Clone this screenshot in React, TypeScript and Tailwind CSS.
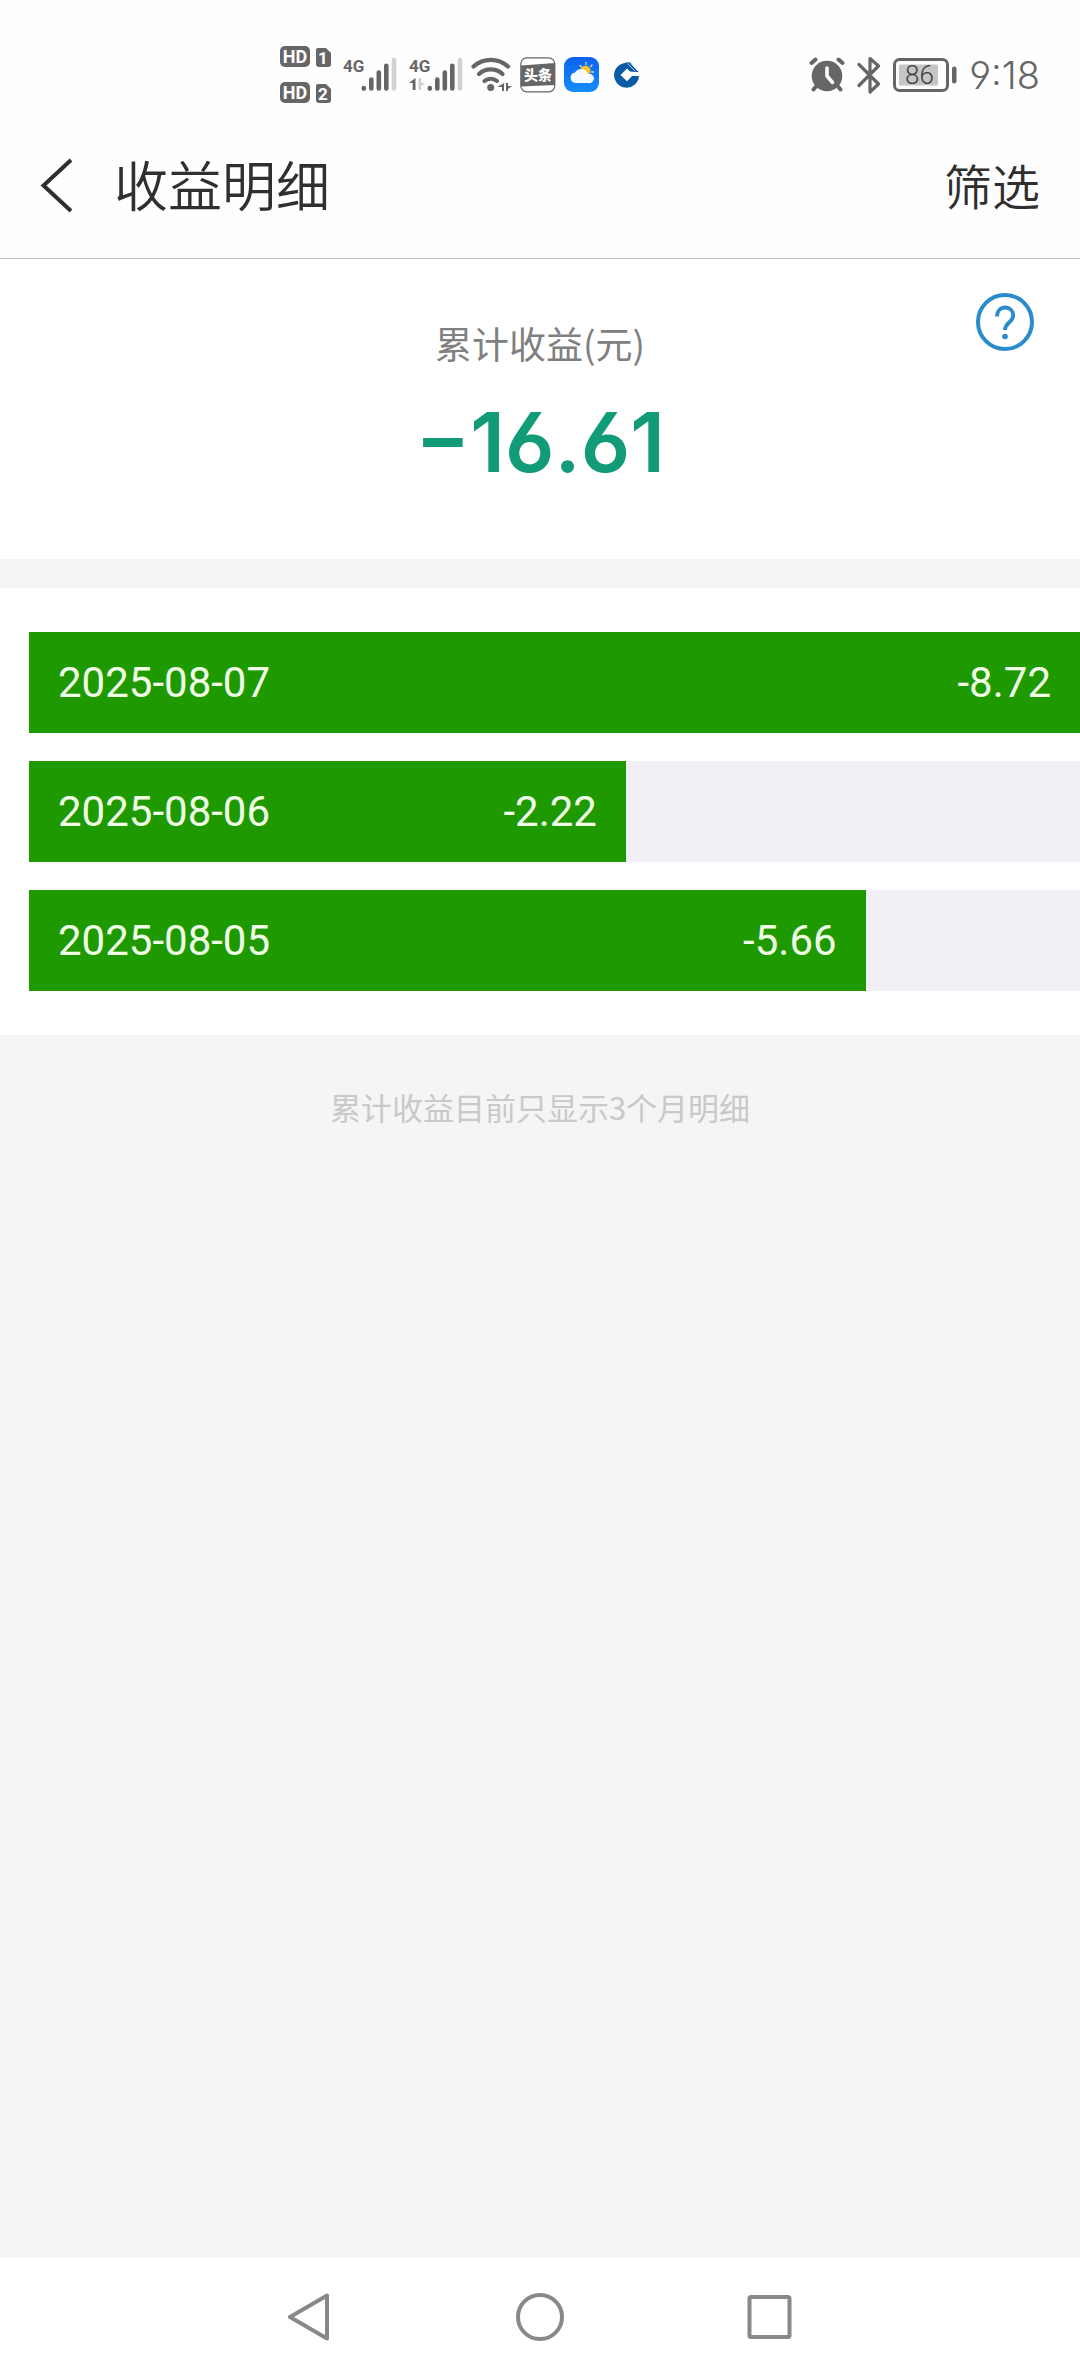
import React from 'react';

interface IncomeRecord {
  date: string;
  amount: string;
  percent: number;
}

// percent is the bar length relative to the largest daily change
const RECORDS: IncomeRecord[] = [
  { date: '2025-08-07', amount: '-8.72', percent: 100 },
  { date: '2025-08-06', amount: '-2.22', percent: 56.8 },
  { date: '2025-08-05', amount: '-5.66', percent: 79.6 },
];

const HdBadge: React.FC<{ sim: string }> = ({ sim }) => (
  <svg width="51" height="22" viewBox="0 0 51 22">
    <rect x="0" y="0" width="30" height="21" rx="5" fill="#666" />
    <text x="15" y="17" textAnchor="middle" fontSize="18" fontWeight="700" fill="#fff" className="font-['Roboto',sans-serif]">HD</text>
    <path d="M38 2h8l5 5v11a3 3 0 0 1-3 3h-9a3 3 0 0 1-3-3V4a2 2 0 0 1 2-2z" fill="#666" />
    <text x="43" y="18" textAnchor="middle" fontSize="17" fontWeight="700" fill="#fff" className="font-['Roboto',sans-serif]">{sim}</text>
  </svg>
);

const Signal: React.FC<{ data?: boolean }> = ({ data }) => (
  <svg width="54" height="48" viewBox="0 -6 54 48">
    <text x="0" y="15" fontSize="17" fontWeight="700" fill="#666" className="font-['Roboto',sans-serif]">4G</text>
    <g strokeWidth="4.6" strokeLinecap="round" stroke="#666">
      <path d="M20.8 31v.6M28.3 22.5v9M35.8 15.5v16M43.3 8.8v22.7" />
      <path d="M51 3v28.5" stroke="#d2d2d2" />
    </g>
    {data && (
      <>
        <path d="M6.5 21v12H3.700v-7H0z" fill="#666" />
        <path d="M9.5 21H12v4l4 2-4 2v4H9.5z" fill="#d2d2d2" />
      </>
    )}
  </svg>
);

const Wifi: React.FC = () => (
  <svg width="41" height="36" viewBox="0 0 41 36">
    <g fill="none" stroke="#666" strokeWidth="4.2" strokeLinecap="round">
      <path d="M2.5 9.5a25.5 25.5 0 0 1 34.5 0" />
      <path d="M8 17a17.5 17.5 0 0 1 23.5 0" />
      <path d="M13.5 24a9.800 9.800 0 0 1 12.5 0" />
    </g>
    <circle cx="19.7" cy="30.5" r="3.5" fill="#666" />
    <path d="M33 26v8h-2v-4h-4.500zM35 26h2v3h4l-4 3v2h-2z" fill="#666" />
  </svg>
);

const ToutiaoIcon: React.FC = () => (
  <svg width="36" height="36" viewBox="0 0 36 36">
    <rect x=".8" y=".8" width="34" height="34" rx="6" fill="#fff" stroke="#666" strokeWidth="1.2" />
    <path d="M1 8.500 35 6v22L1 29.500z" fill="#666" />
    <text x="18" y="23" textAnchor="middle" fontSize="14" fontWeight="900" fill="#fff" className="font-['Noto_Sans_CJK_SC',sans-serif]">头条</text>
  </svg>
);

const WeatherIcon: React.FC = () => (
  <svg width="36" height="36" viewBox="0 0 36 36">
    <defs>
      <linearGradient id="sky" x1="0" y1="0" x2="0" y2="1">
        <stop offset="0" stopColor="#0a63f0" />
        <stop offset="1" stopColor="#168df8" />
      </linearGradient>
    </defs>
    <rect width="35" height="35" rx="9" fill="url(#sky)" />
    <path d="M22 5.500v2M16 8.500l1.300 1.500M28 8l-1.300 1.500M29.500 15h-2M28 20l-1-.8" stroke="#f3dc83" strokeWidth="1.3" strokeLinecap="round" />
    <circle cx="21.5" cy="13.8" r="5" fill="#fdc32c" />
    <path d="M11.500 26a5.300 5.300 0 0 1-.5-10.500 7 7 0 0 1 12.800 1.500A4.700 4.700 0 1 1 24 26z" fill="#f5fbff" />
  </svg>
);

const BankIcon: React.FC = () => (
  <svg width="26" height="26" viewBox="0 0 26 26">
    <path fillRule="evenodd" d="M14.500.8A12.500 12.500 0 1 0 25 14h-7l-5 5.200L6.500 13 13 6.500l3 3 3.300.3z" fill="#0a5ba6" />
    <path d="M11.500.5h4.800l8.300 9.500h-5.200z" fill="#0a5ba6" />
    <path d="m13.500 1.500 8 8M16.800 1.500l7 7.500" stroke="#fff" strokeWidth=".7" />
  </svg>
);

const Alarm: React.FC = () => (
  <svg width="36" height="36" viewBox="0 0 36 36">
    <circle cx="18" cy="19" r="15.3" fill="#666" />
    <path d="m2.500 6 4-3.500M33.500 6l-4-3.500M7 29.500l-2.500 3M29 29.500l2.500 3" stroke="#666" strokeWidth="4" strokeLinecap="round" />
    <path d="M18 11v8l5.500 6.500" fill="none" stroke="#fff" strokeWidth="3.5" strokeLinecap="round" strokeLinejoin="round" />
  </svg>
);

const Bluetooth: React.FC = () => (
  <svg width="24" height="38" viewBox="0 0 24 38" fill="none" stroke="#666" strokeWidth="3.2" strokeLinecap="round" strokeLinejoin="round">
    <path d="M2 8.500 21.500 28 13 36V2.500l8.500 7.500L2 29.500" />
  </svg>
);

const Battery: React.FC = () => (
  <svg width="64" height="34" viewBox="0 0 64 34">
    <rect x="1.5" y="1.5" width="53" height="31" rx="5" fill="none" stroke="#666" strokeWidth="3" />
    <rect x="6" y="6.5" width="39" height="21" rx="1.5" fill="#c6c6c6" />
    <text x="26.5" y="26" textAnchor="middle" fontSize="26" fontWeight="300" fill="#404040" className="font-['Roboto',sans-serif]">86</text>
    <rect x="59" y="8.5" width="4.5" height="17" rx="2.2" fill="#666" />
  </svg>
);

const StatusBar: React.FC = () => (
  <div className="flex items-center justify-between pt-[38px] pr-10 pl-[280px]">
    <div className="flex items-center">
      <div className="flex flex-col gap-3.5 py-2">
        <HdBadge sim="1" />
        <HdBadge sim="2" />
      </div>
      <div className="ml-3 flex items-center gap-3">
        <Signal />
        <Signal data />
      </div>
      <div className="ml-2 flex items-center gap-2">
        <Wifi />
        <ToutiaoIcon />
      </div>
      <div className="ml-2 flex items-center gap-3.5">
        <WeatherIcon />
        <BankIcon />
      </div>
    </div>
    <div className="flex items-center gap-3">
      <Alarm />
      <Bluetooth />
      <Battery />
      <span className="font-['Inter',sans-serif] text-[38px] leading-10 font-light text-[#666] [font-feature-settings:'ss01']">9:18</span>
    </div>
  </div>
);

const Header: React.FC = () => (
  <header className="flex items-center justify-between border-b border-[#c0c0c0] pt-8 pr-10 pb-[34px] pl-9 text-[#2f2f2f]">
    <div className="flex items-center">
      <button type="button" aria-label="返回">
        <svg width="40" height="60" viewBox="0 0 40 60" fill="none" stroke="#2f2f2f" strokeWidth="4">
          <path d="M35 6 7.500 31.500 35 57" />
        </svg>
      </button>
      <h1 className="ml-[38px] text-[54px] leading-20 font-[350]">收益明细</h1>
    </div>
    <button type="button" className="text-5xl leading-20 font-[350]">筛选</button>
  </header>
);

const Summary: React.FC = () => (
  <section className="grid grid-cols-[1fr_auto_1fr] items-start bg-white px-11 pt-8 pb-16">
    <div className="col-start-2 flex flex-col items-center pt-6">
      <h2 className="text-[37px] leading-14 text-[#808080]">累计收益(元)</h2>
      <p className="mt-5 font-['Inter',sans-serif] text-[82px] leading-26 font-semibold text-[#119b76] [font-feature-settings:'ss01']">−16.61</p>
    </div>
    <button type="button" aria-label="收益说明" className="justify-self-end">
      <svg width="62" height="62" viewBox="0 0 62 62" fill="none" stroke="#2a8ccc" strokeWidth="4">
        <circle cx="31" cy="31" r="27" />
        <path d="M23 25.500c0-5.500 3.500-9 8.200-9s8 3.300 8 8c0 7-8.200 6.500-8.200 14.500" strokeWidth="3.8" />
        <circle cx="31" cy="45.5" r="2.8" fill="#2a8ccc" stroke="none" />
      </svg>
    </button>
  </section>
);

const IncomeList: React.FC<{ records: IncomeRecord[] }> = ({ records }) => (
  <ul className="mt-[29px] flex flex-col gap-7 bg-white py-11 pl-[29px]">
    {records.map(record => (
      <li key={record.date} className="bg-[#f0f0f6]">
        <div
          className="flex items-center justify-between bg-[#1f9900] px-[29px] py-6 font-['Roboto',sans-serif] text-[42px] leading-[53px] text-[#f0ffe8]"
          style={{ width: `${record.percent}%` }}
        >
          <time>{record.date}</time>
          <span>{record.amount}</span>
        </div>
      </li>
    ))}
  </ul>
);

const NavBar: React.FC = () => (
  <nav className="flex justify-center gap-[182px] bg-white py-[35px]">
    <button type="button" aria-label="返回">
      <svg width="48" height="48" viewBox="0 0 48 48" fill="none" stroke="#888" strokeWidth="4" strokeLinejoin="round">
        <path d="M41 2.500v43L4 24z" />
      </svg>
    </button>
    <button type="button" aria-label="主页">
      <svg width="48" height="48" viewBox="0 0 48 48" fill="none" stroke="#888" strokeWidth="4">
        <circle cx="24" cy="24" r="22" />
      </svg>
    </button>
    <button type="button" aria-label="最近任务">
      <svg width="48" height="48" viewBox="0 0 48 48" fill="none" stroke="#888" strokeWidth="4">
        <rect x="3.5" y="4" width="40" height="40" rx="1.5" />
      </svg>
    </button>
  </nav>
);

export default function App() {
  return (
    <div className="flex min-h-screen flex-col bg-[#f5f5f5] font-['Noto_Sans_CJK_SC',sans-serif]">
      <div className="bg-[#fefefe]">
        <StatusBar />
        <Header />
      </div>
      <main className="flex-1">
        <Summary />
        <IncomeList records={RECORDS} />
        <p className="mt-12 text-center text-[31px] leading-12 text-[#c9c9c9]">累计收益目前只显示3个月明细</p>
      </main>
      <NavBar />
    </div>
  );
}
